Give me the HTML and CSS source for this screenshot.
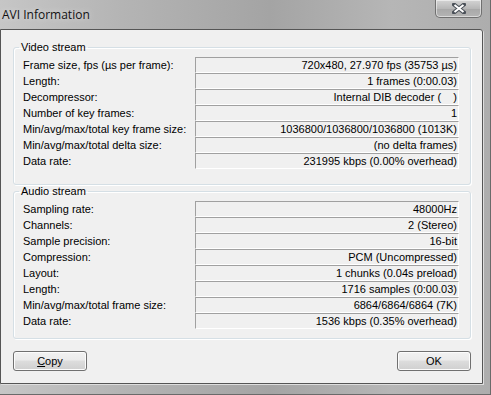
FILE: index.html
```html
<!DOCTYPE html>
<html>

<head>
    <title>AVI Information</title>
    <link rel="stylesheet" href="styles.css">
</head>

<body>
    <div class="window">
        <div class="titlebar">
            <span class="title">AVI Information</span>
            <div class="close">
                <svg width="14" height="11" viewBox="0 0 14 11">
                    <path d="M2 1.5 L12 9.5 M12 1.5 L2 9.5" stroke="#4a5058" stroke-width="4" stroke-linecap="square" fill="none"/>
                    <path d="M2.5 2 L11.5 9 M11.5 2 L2.5 9" stroke="#ffffff" stroke-width="2" fill="none"/>
                </svg>
            </div>
        </div>

        <div class="client">
            <fieldset class="group video">
                <legend>Video stream</legend>
                <div class="rows">
                    <span class="label">Frame size, fps (µs per frame):</span>
                    <span class="field">720x480, 27.970 fps (35753 µs)</span>
                    <span class="label">Length:</span>
                    <span class="field">1 frames (0:00.03)</span>
                    <span class="label">Decompressor:</span>
                    <span class="field">Internal DIB decoder (&nbsp;&nbsp;&nbsp;&nbsp;)</span>
                    <span class="label">Number of key frames:</span>
                    <span class="field">1</span>
                    <span class="label">Min/avg/max/total key frame size:</span>
                    <span class="field">1036800/1036800/1036800 (1013K)</span>
                    <span class="label">Min/avg/max/total delta size:</span>
                    <span class="field">(no delta frames)</span>
                    <span class="label">Data rate:</span>
                    <span class="field">231995 kbps (0.00% overhead)</span>
                </div>
            </fieldset>

            <fieldset class="group audio">
                <legend>Audio stream</legend>
                <div class="rows">
                    <span class="label">Sampling rate:</span>
                    <span class="field">48000Hz</span>
                    <span class="label">Channels:</span>
                    <span class="field">2 (Stereo)</span>
                    <span class="label">Sample precision:</span>
                    <span class="field">16-bit</span>
                    <span class="label">Compression:</span>
                    <span class="field">PCM (Uncompressed)</span>
                    <span class="label">Layout:</span>
                    <span class="field">1 chunks (0.04s preload)</span>
                    <span class="label">Length:</span>
                    <span class="field">1716 samples (0:00.03)</span>
                    <span class="label">Min/avg/max/total frame size:</span>
                    <span class="field">6864/6864/6864 (7K)</span>
                    <span class="label">Data rate:</span>
                    <span class="field">1536 kbps (0.35% overhead)</span>
                </div>
            </fieldset>

            <div class="buttons">
                <button class="btn"><u>C</u>opy</button>
                <button class="btn">OK</button>
            </div>
        </div>
    </div>
</body>

</html>
```

FILE: styles.css
```css
body {
    margin: 0;
    width: 491px;
    height: 395px;
    overflow: hidden;
    font-family: "Liberation Sans", Arial, sans-serif;
    font-size: 11px;
}

.window {
    width: 491px;
    height: 395px;
    box-sizing: border-box;
    background: linear-gradient(90deg, #c6c6c6 0%, #b4b4b4 25%, #a4a4a4 55%, #b6b6b6 80%, #adadad 100%);
    border-right: 1px solid #6a6a6a;
    border-bottom: 1px solid #6a6a6a;
}

.titlebar {
    height: 29px;
    display: flex;
    align-items: flex-start;
}

.title {
    font-family: "Open Sans", "Noto Sans", sans-serif;
    font-size: 12px;
    color: #111;
    margin: 6px 0 0 2px;
    text-shadow: 0 0 6px rgba(255, 255, 255, 0.6);
}

.close {
    margin-left: auto;
    margin-right: 8px;
    width: 47px;
    height: 18px;
    box-sizing: border-box;
    border: 1px solid #707070;
    border-top: none;
    border-radius: 0 0 5px 5px;
    background: linear-gradient(#d4d4d4, #b8b8b8 50%, #a8a8a8 51%, #b4b4b4);
    box-shadow: inset 0 0 0 1px rgba(255, 255, 255, 0.5);
    display: flex;
    align-items: center;
    justify-content: center;
}

.client {
    width: 483px;
    height: 355px;
    box-sizing: border-box;
    border: 1px solid #555;
    border-radius: 0 3px 0 0;
    background-color: #f0f0f0;
    padding: 0 11px 0 12px;
    box-shadow: 1px 1px 0 #dedede;
}

.group {
    margin: 11px 0 0 0;
    padding: 0 11px 15px 9px;
    border: 1px solid #d5dfe5;
    border-radius: 3px;
    box-shadow: inset 1px 1px 0 #fff, 1px 1px 0 #fff;
}

.group legend {
    padding: 0 2px;
    margin-left: -4px;
    line-height: 13px;
    color: #000;
}

.group.audio {
    margin-top: 0;
    padding-bottom: 9px;
}

.rows {
    margin-top: 3px;
    display: grid;
    grid-template-columns: 172px 264px;
}

.label {
    height: 16px;
    line-height: 16px;
    white-space: nowrap;
}

.field {
    height: 16px;
    box-sizing: border-box;
    line-height: 14px;
    text-align: right;
    padding-right: 1px;
    white-space: nowrap;
    border-top: 1px solid #a0a0a0;
    border-left: 1px solid #a0a0a0;
    border-bottom: 1px solid #fff;
    border-right: 1px solid #fff;
}

.buttons {
    display: flex;
    justify-content: space-between;
    margin-top: 12px;
}

.btn {
    width: 74px;
    height: 20px;
    padding: 0;
    font-family: inherit;
    font-size: 11px;
    color: #000;
    border: 1px solid #707070;
    border-radius: 3px;
    background: linear-gradient(#f2f2f2, #ebebeb 45%, #dddddd 50%, #cfcfcf);
    box-shadow: inset 0 0 0 1px #fcfcfc;
}
```
